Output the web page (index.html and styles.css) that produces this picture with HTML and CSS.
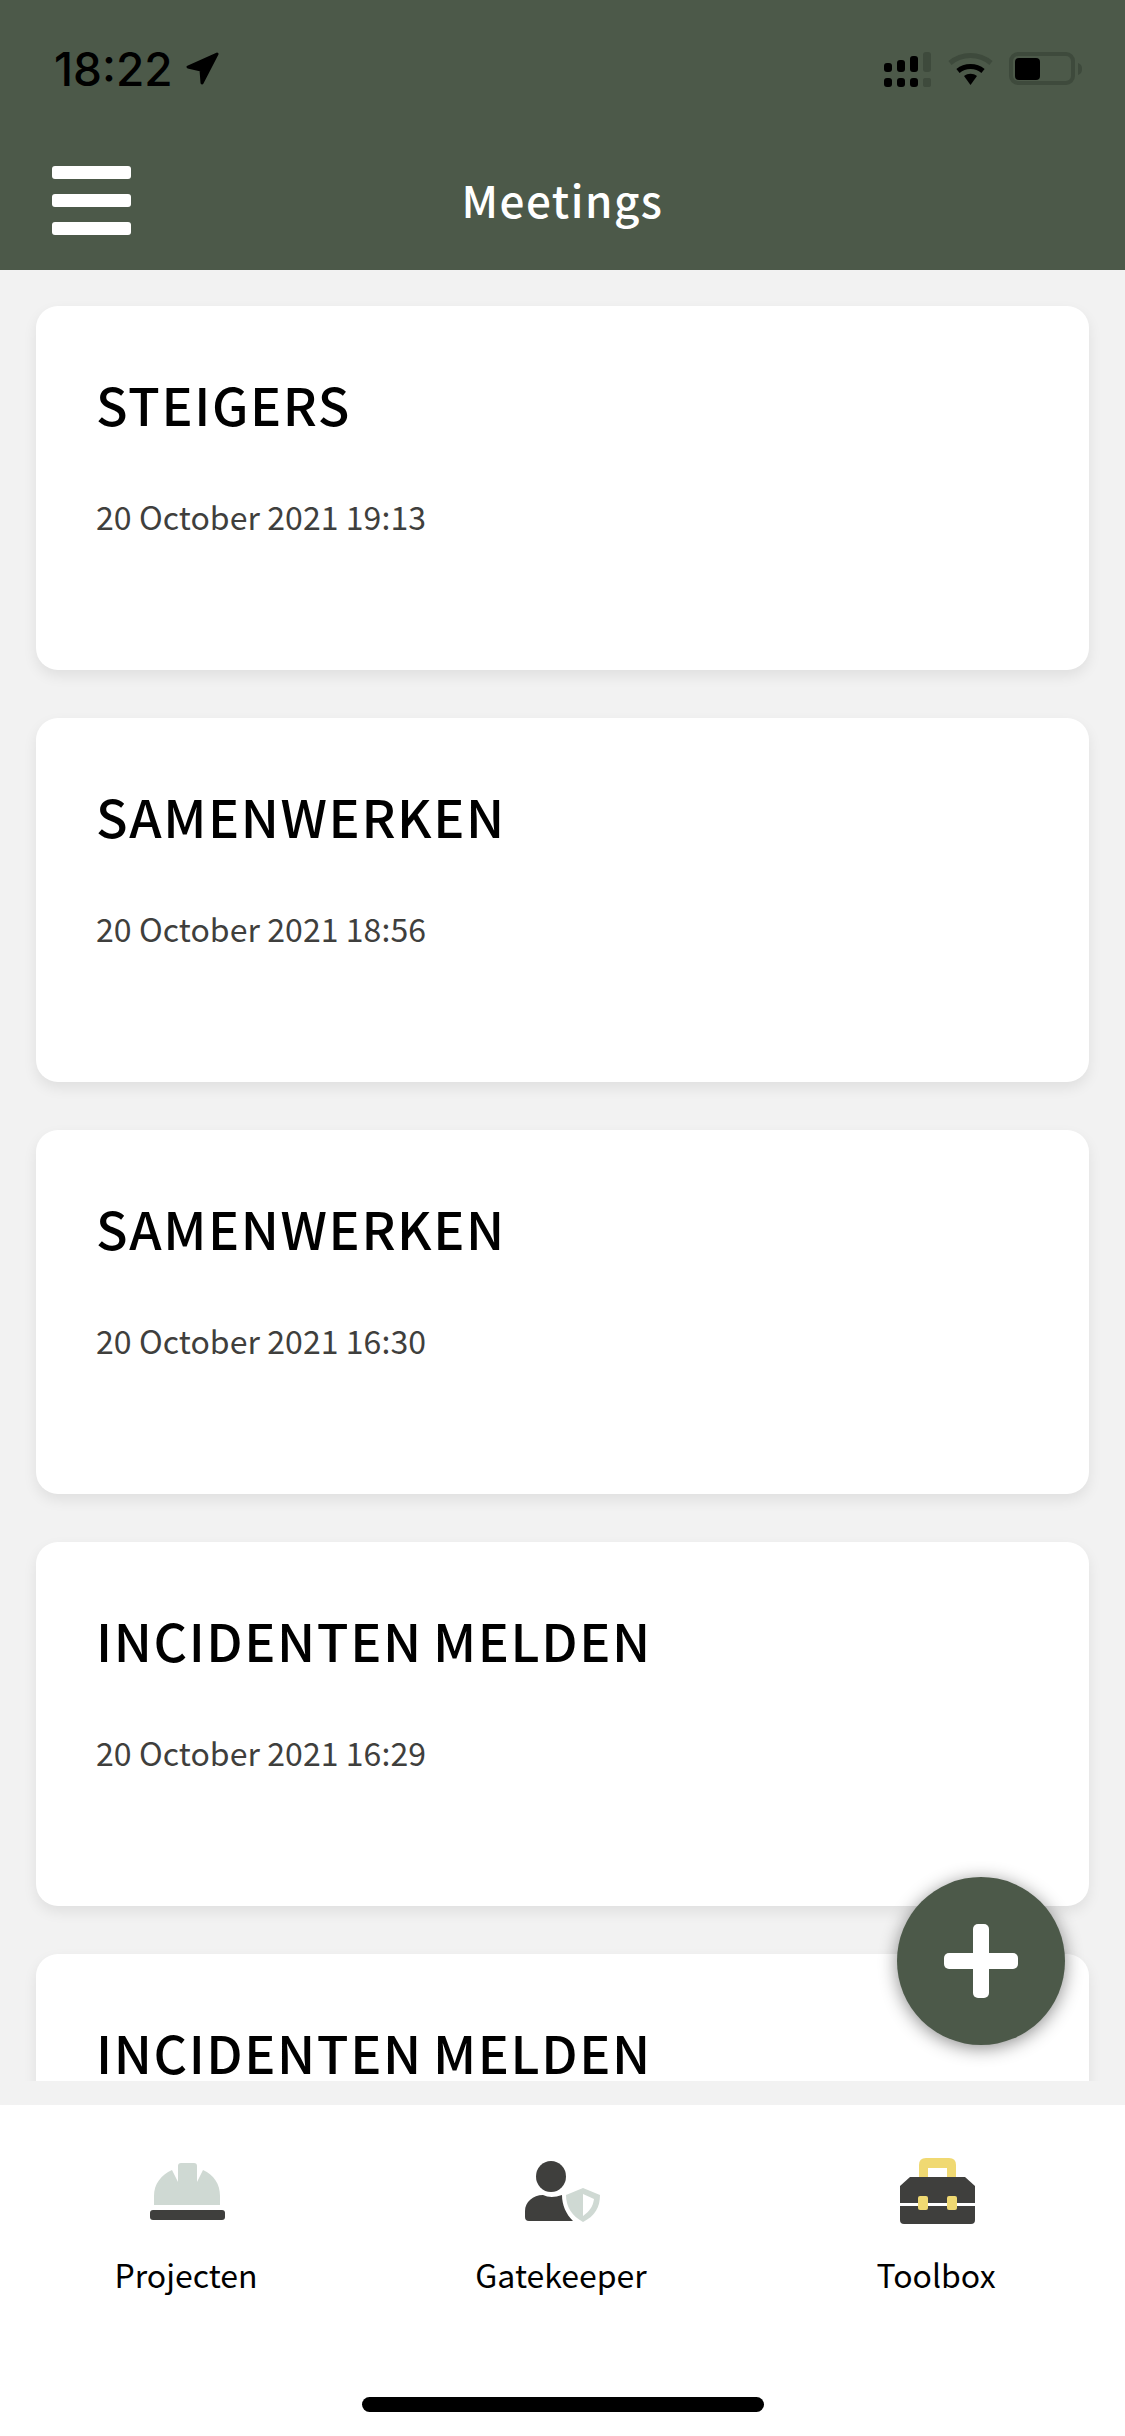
FILE: index.html
```html
<!DOCTYPE html>
<html lang="en">
<head>
    <meta charset="UTF-8">
    <meta name="viewport" content="width=device-width, initial-scale=1.0">
    <title>Meetings</title>
    <link rel="stylesheet" href="styles.css">
</head>
<body>
    <div class="app">
        <header class="header">
            <div class="status-bar">
                <div class="status-left">
                    <span class="clock">18:22</span>
                    <svg class="arrow" width="33" height="33" viewBox="0 0 33 33"><path d="M31 2 L2 15 L15 18 L16 31 Z" fill="#000" stroke="#000" stroke-width="3" stroke-linejoin="round"/></svg>
                </div>
                <div class="status-right">
                    <svg width="47" height="35" viewBox="0 0 47 35">
                        <rect x="0" y="11" width="8" height="9" rx="3"/>
                        <rect x="13" y="8" width="8" height="12" rx="3"/>
                        <rect x="26" y="4" width="8" height="16" rx="3"/>
                        <rect x="39" y="0" width="8" height="20" rx="3" fill="#3e4a3c"/>
                        <rect x="0" y="26" width="8" height="9" rx="3"/>
                        <rect x="13" y="26" width="8" height="9" rx="3"/>
                        <rect x="26" y="26" width="8" height="9" rx="3"/>
                        <rect x="39" y="26" width="8" height="9" rx="2" fill="#3e4a3c"/>
                    </svg>
                    <svg class="wifi" width="45" height="33" viewBox="0 0 45 33">
                        <path d="M2 11 C14 1 31 1 43 11" fill="none" stroke="#3e4a3c" stroke-width="5"/>
                        <path d="M10 19 C17 13 28 13 35 19" fill="none" stroke="#000" stroke-width="5"/>
                        <path d="M16 24 C20 21 25 21 29 24 L22.5 33 Z" fill="#000"/>
                    </svg>
                    <svg class="battery" width="73" height="33" viewBox="0 0 73 33">
                        <rect x="2" y="2" width="62" height="29" rx="7" fill="none" stroke="#3e4a3c" stroke-width="4"/>
                        <rect x="6" y="6" width="25" height="22" rx="4"/>
                        <path d="M69 11 C72 12 73 14 73 17 C73 20 72 22 69 23 Z" fill="#3e4a3c"/>
                    </svg>
                </div>
            </div>
            <div class="nav-bar">
                <div class="menu-btn"><span></span><span></span><span></span></div>
                <h1 class="nav-title">Meetings</h1>
            </div>
        </header>

        <main class="meeting-list">
            <div class="card">
                <div class="card-title">STEIGERS</div>
                <div class="card-date">20 October 2021 19:13</div>
            </div>
            <div class="card">
                <div class="card-title">SAMENWERKEN</div>
                <div class="card-date">20 October 2021 18:56</div>
            </div>
            <div class="card">
                <div class="card-title">SAMENWERKEN</div>
                <div class="card-date">20 October 2021 16:30</div>
            </div>
            <div class="card">
                <div class="card-title">INCIDENTEN MELDEN</div>
                <div class="card-date">20 October 2021 16:29</div>
            </div>
            <div class="card">
                <div class="card-title">INCIDENTEN MELDEN</div>
            </div>
        </main>

        <div class="fab"><span class="fab-h"></span><span class="fab-v"></span></div>

        <nav class="tab-bar">
            <div class="tab">
                <svg class="tab-icon" width="75" height="66" viewBox="0 -5 75 66">
                    <path d="M4 42 V33 C4 21 11 12 22 7 L28 19 V3 Q28 0 31 0 H44 Q47 0 47 3 V19 L53 7 C64 12 70 21 70 33 V42 Z" fill="#cfd9d3"/>
                    <rect x="0" y="47" width="75" height="10" rx="3" fill="#3f3f3d"/>
                </svg>
                <span class="tab-label">Projecten</span>
            </div>
            <div class="tab">
                <svg class="tab-icon" width="75" height="66" viewBox="0 -3 75 66">
                    <ellipse cx="26" cy="15.500" rx="15" ry="15.500" fill="#3f3f3d"/>
                    <path d="M4 60 Q0 60 0 56 V50 C0 41 8 34 18 34 Q26 38 37 34 C37 44 41 53 48 60 Z" fill="#3f3f3d"/>
                    <path d="M58 27 L75 34 C75 46 70 55 58 61 C47 55 41 46 41 34 Z" fill="#cfd9d3"/>
                    <path d="M58 33 L69 38 C68 45 65 50 58 55 Z" fill="#fff"/>
                </svg>
                <span class="tab-label">Gatekeeper</span>
            </div>
            <div class="tab">
                <svg class="tab-icon" width="75" height="66" viewBox="0 0 75 66">
                    <path d="M19 19 V7 Q19 0 26 0 H49 Q56 0 56 7 V19 H47 V10 H28 V19 Z" fill="#f0d972"/>
                    <path d="M10 19 H65 L75 28 V45 H0 V28 Z" fill="#3f3f3d"/>
                    <path d="M0 48 H75 V62 Q75 66 71 66 H4 Q0 66 0 62 Z" fill="#3f3f3d"/>
                    <rect x="18" y="38" width="10" height="14" rx="2" fill="#f0d972"/>
                    <rect x="47" y="38" width="10" height="14" rx="2" fill="#f0d972"/>
                </svg>
                <span class="tab-label">Toolbox</span>
            </div>
            <div class="home-indicator"></div>
        </nav>
    </div>
</body>
</html>
```

FILE: styles.css
```css
* {
    box-sizing: border-box;
}
body {
    margin: 0;
    font-family: "Noto Sans CJK SC", "Noto Sans", sans-serif;
    background-color: #f2f2f2;
}
.app {
    position: relative;
    width: 1125px;
    height: 2436px;
    overflow: hidden;
    display: flex;
    flex-direction: column;
}
.header {
    height: 270px;
    flex: none;
    background: #4c5949;
}
.status-bar {
    height: 166px;
    padding: 52px 43px 0 54px;
    display: flex;
    justify-content: space-between;
    align-items: flex-start;
}
.status-left {
    display: flex;
    align-items: flex-start;
    gap: 13px;
}
.clock {
    font-family: Inter, "Liberation Sans", sans-serif;
    font-size: 46px;
    font-weight: 500;
    line-height: 34px;
    color: #000;
}
.status-right {
    display: flex;
    align-items: flex-start;
    gap: 17px;
}
.status-right .battery {
    margin-left: -1px;
}
.nav-bar {
    display: grid;
    grid-template-columns: 1fr auto 1fr;
    align-items: start;
    padding-left: 52px;
}
.menu-btn {
    display: flex;
    flex-direction: column;
    gap: 15px;
    width: 79px;
}
.menu-btn span {
    display: block;
    height: 13px;
    background: #fff;
    border-radius: 3px;
}
.nav-title {
    margin: -2px 0 0 -52px;
    grid-column: 2;
    font-size: 44px;
    font-weight: 500;
    letter-spacing: 1.500px;
    line-height: 70px;
    color: #fff;
}
.meeting-list {
    flex: none;
    height: 1811px;
    padding: 36px 36px 0;
    overflow: hidden;
    display: flex;
    flex-direction: column;
    gap: 48px;
}
.card {
    flex: none;
    height: 364px;
    padding: 60px 60px 0;
    background: #fff;
    border-radius: 22px;
    box-shadow: 0 6px 14px rgba(0, 0, 0, 0.08);
}
.card-title {
    font-size: 52px;
    font-weight: 500;
    letter-spacing: 1.600px;
    word-spacing: -3px;
    line-height: 76px;
    color: #000;
}
.card-date {
    margin-top: 48px;
    font-size: 32px;
    letter-spacing: 0.070px;
    line-height: 52px;
    color: #3f3f3d;
}
.fab {
    position: absolute;
    left: 897px;
    top: 1877px;
    width: 168px;
    height: 168px;
    border-radius: 50%;
    background: #4c5949;
    box-shadow: 0 3px 18px rgba(0, 0, 0, 0.45);
}
.fab-h, .fab-v {
    position: absolute;
    background: #fff;
    border-radius: 5px;
}
.fab-h {
    left: 47px;
    top: 76px;
    width: 74px;
    height: 16px;
}
.fab-v {
    left: 76px;
    top: 47px;
    width: 16px;
    height: 74px;
}
.tab-bar {
    position: relative;
    flex: none;
    margin-top: 24px;
    height: 331px;
    padding-top: 53px;
    background: #fff;
    display: grid;
    grid-template-columns: repeat(3, 1fr);
    align-items: start;
}
.tab {
    display: flex;
    flex-direction: column;
    align-items: center;
}
.tab-icon {
    display: block;
}
.tab-label {
    margin: 24px 3px 0 0;
    font-size: 32px;
    line-height: 52px;
    color: #000;
}
.home-indicator {
    position: absolute;
    left: 362px;
    top: 292px;
    width: 402px;
    height: 15px;
    border-radius: 8px;
    background: #000;
}
```
